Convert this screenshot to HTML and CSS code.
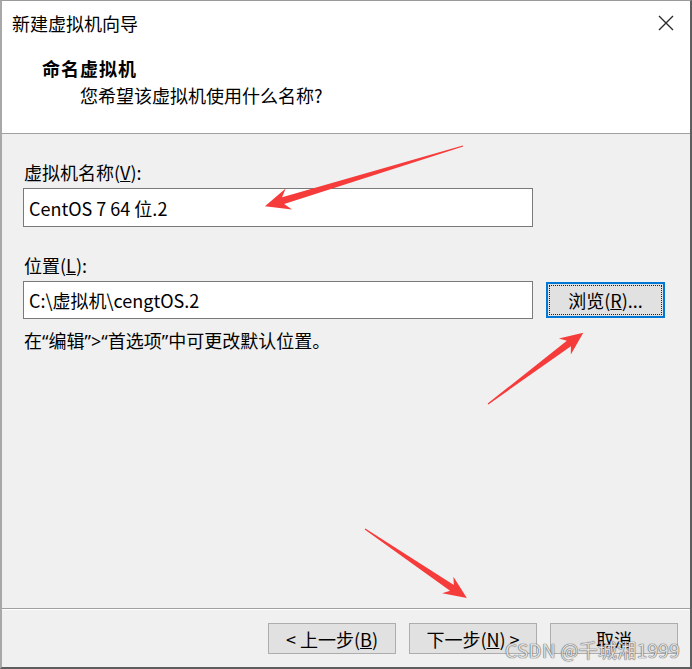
FILE: index.html
```html
<!DOCTYPE html>
<html lang="zh-CN">
<head>
<meta charset="utf-8">
<title>新建虚拟机向导</title>
<link rel="stylesheet" href="styles.css">
</head>
<body>
<div class="window">
  <div class="header">
    <div class="titlebar">
      <span class="title">新建虚拟机向导</span>
      <svg class="close" width="16" height="16" viewBox="0 0 16 16"><path d="M1 1 L15 15 M15 1 L1 15" stroke="#2b2b2b" stroke-width="1.4" fill="none"/></svg>
    </div>
    <div class="heading">命名虚拟机</div>
    <div class="subtitle">您希望该虚拟机使用什么名称?</div>
  </div>
  <div class="content">
    <div class="label first">虚拟机名称(<u>V</u>):</div>
    <div class="field name">CentOS 7 64 位.2</div>
    <div class="label second">位置(<u>L</u>):</div>
    <div class="row">
      <div class="field loc">C:\虚拟机\cengtOS.2</div>
      <div class="btn browse"><span>浏览(<u>R</u>)...</span></div>
    </div>
    <div class="hint">在<span class="q">“</span>编辑<span class="q">”&gt;“</span>首选项<span class="q">”</span>中可更改默认位置。</div>
  </div>
  <div class="footer">
    <div class="btn nav">&lt; 上一步(<u>B</u>)</div>
    <div class="btn nav">下一步(<u>N</u>) &gt;</div>
    <div class="btn nav">取消</div>
  </div>
  <div class="watermark">CSDN @千城湘1999</div>
  <svg class="arrows" width="692" height="669" viewBox="0 0 692 669">
    <g fill="#f63b3b">
      <polygon transform="translate(463,146) rotate(163.1)" points="0,-0.6 188,-3.6 182,-11 207,0 182,11 188,3.6 0,0.6"/>
      <polygon transform="translate(488,404) rotate(-36.8)" points="0,-0.6 101,-3.4 96,-10 119,0 96,10 101,3.4 0,0.6"/>
      <polygon transform="translate(365,529) rotate(34.1)" points="0,-0.6 105,-3.4 100,-10 123,0 100,10 105,3.4 0,0.6"/>
    </g>
  </svg>
</div>
</body>
</html>
```
FILE: styles.css
```css
* { box-sizing: border-box; }
html, body { margin: 0; padding: 0; }
body {
  font-family: "Noto Sans CJK SC", "Noto Sans", sans-serif;
  font-size: 18px;
  color: #000;
  background: #f0f0f0;
}
.window {
  position: relative;
  width: 692px;
  height: 669px;
  display: flex;
  flex-direction: column;
  background: #f0f0f0;
  border-top: 1px solid #9a9a9a;
  border-left: 2px solid #a8a8a8;
  border-right: 2px solid #5e5e5e;
  border-bottom: 2px solid #5e5e5e;
  overflow: hidden;
}
.header {
  height: 133px;
  background: #fff;
  border-bottom: 1px solid #a0a0a0;
  padding-top: 10px;
}
.titlebar {
  display: flex;
  align-items: center;
  justify-content: space-between;
  height: 24px;
  padding-left: 10px;
  padding-right: 16px;
  line-height: 24px;
}
.close { display: block; margin-top: -1px; }
.heading {
  margin-top: 21px;
  padding-left: 40px;
  line-height: 24px;
  font-weight: bold;
  letter-spacing: 1px;
}
.subtitle {
  margin-top: 3px;
  padding-left: 78px;
  line-height: 24px;
}
.content {
  flex: 1;
  padding-left: 21px;
  padding-top: 26px;
  border-bottom: 1px solid #a0a0a0;
}
.label { line-height: 24px; padding-left: 1px; }
.label.second { margin-top: 26px; }
.field {
  background: #fff;
  border: 1px solid #7a7a7a;
  width: 510px;
  padding-left: 5px;
  display: flex;
  align-items: center;
  margin-top: 4px;
}
.field.name { height: 39px; }
.row {
  display: flex;
  align-items: center;
  margin-top: 4px;
  gap: 13px;
}
.field.loc { height: 38px; margin-top: 0; }
.btn {
  display: flex;
  align-items: center;
  justify-content: center;
  background: #e1e1e1;
  border: 1px solid #adadad;
  line-height: 24px;
}
.browse {
  width: 119px;
  height: 36px;
  border: 2px solid #0078d7;
  outline: 1px dotted #222;
  outline-offset: -4px;
}
.hint { margin-top: 9px; line-height: 24px; padding-left: 1px; }
.q { font-family: "Noto Sans", sans-serif; }
.footer {
  height: 58px;
  border-top: 1px solid #fff;
  display: flex;
  justify-content: flex-end;
  align-items: flex-start;
  gap: 13px;
  padding-top: 13px;
  padding-right: 12px;
}
.nav { width: 128px; height: 31px; }
.watermark {
  position: absolute;
  left: 503px;
  top: 637px;
  line-height: 24px;
  font-size: 19px;
  letter-spacing: 0.3px;
  color: rgba(238, 238, 238, 0.92);
  text-shadow: 0 0 1px #4a4a4a, 0 0 1px #4a4a4a;
  white-space: nowrap;
}
.arrows { position: absolute; left: -2px; top: -1px; pointer-events: none; }
```
